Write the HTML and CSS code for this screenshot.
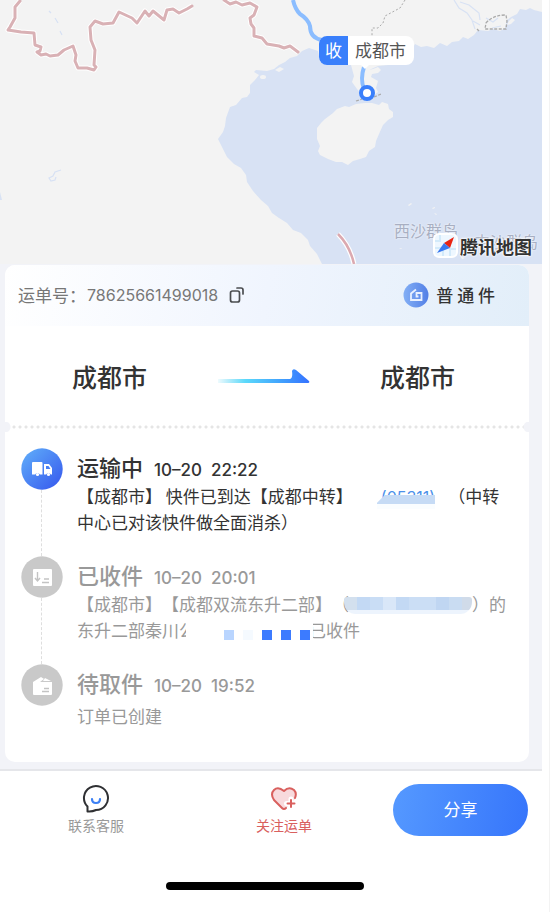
FILE: index.html
```html
<!DOCTYPE html>
<html lang="zh-CN">
<head>
<meta charset="utf-8">
<meta name="viewport" content="width=device-width, initial-scale=1">
<title>运单详情</title>
<link rel="stylesheet" href="styles.css">
</head>
<body>
<div class="page">
  <section class="map" aria-label="物流地图">
    <svg class="map-art" viewBox="0 0 542 264" preserveAspectRatio="xMinYMin slice" aria-hidden="true">
      <rect width="542" height="264" fill="#f3f3f3"/>
      <path fill="#d8e2f4" d="M542 12 L534 10 530 8 526 10 520 9 517 14 511 17 507 20 505 28 500 31 493 29 488 31 478 30 474 35 468 39 463 37 459 41 452 42 447 46 440 43 434 48 427 46 421 47 415 44 411 51 398 64 378 66 369 70 373 69 378 67 381 70 378 73 372 74 371 77 378 81 376 88 378 92 374 95 361 94 357 89 352 82 354 76 351 65 320 62 318 51 309 48 302 51 297 56 290 58 285 62 279 65 274 69 267 71 256 70 254 72 259 75 255 80 250 85 250 93 247 97 242 98 236 105 230 107 226 118 225 126 223 132 218 139 223 149 227 157 234 164 241 168 246 175 247 182 253 191 261 200 268 206 272 213 279 218 287 223 293 230 301 233 308 240 310 246 317 254 322 264 H542 Z"/>
      <g fill="#f3f3f3">
        <path d="M317 139 L317 128 321 123 325 119 333 113 337 109 345 106 349 107 356 104 365 103 372 103 379 105 382 102 388 104 389 109 393 112 393 117 388 120 383 125 379 134 376 141 375 147 369 151 366 157 360 159 353 161 348 165 342 162 336 162 328 159 320 155 318 151 320 146Z"/>
        <path d="M408 205l3-2 1 1-3 2zM432 208l3-1v1l-2 1zM434 213l3 1-1 1zM399 249l2-1 1 1zM441 255l3 1-2 1zM460 256l5 2-3 1z"/>
        <ellipse cx="263" cy="77" rx="3" ry="2"/>
        <path d="M275 70l5-3 4 2-5 3zM507 25l2-4 3-3 3 2-4 4z"/>
      </g>
      <path d="M454 0l5 8 8 5 5 7 3 9M460 2l9 3 10 8 1 7M473 21l7 4M486 18l7 4 5-4M492 28l9-2" fill="none" stroke="#d8e2f4" stroke-width="1.2"/>
      <path d="M61 170l-6 2-2 4-4 2 2 3 4-1 1-3M49 11l2 2M55 18l3 5M60 31l2 4" fill="none" stroke="#d7e1f4" stroke-width="1.2"/>
      <path d="M0 192v8h2z" fill="#d8e2f4"/>
      <g fill="none" stroke="#fff" stroke-width="5" stroke-linejoin="round">
        <path d="M20 1l-5 6 0 11-5 9-2 3 13 2 13 1 1 12 6 2-1 4-3 1 4 3 5-1 4 2 8-1 6-5 9-4 3 9-1 6 3 7 9 0 7 2 2-3-2-2 1-15-4-10-1-13 5-6 8 3 10-1 6-11 13 6 5 5 8-12 4 5 4-5 11 9 3-10 6-1 6 4 8-4 5-3"/>
        <path d="M224 0l6 4 6-2 6 3 8-2 7 4-3 8-4 3 1 6 3 4v8l8 2 5 6 12 2 5 2 6-2 8 6"/>
      </g>
      <g fill="none" stroke="#d9b1b5" stroke-width="3" stroke-linecap="round" stroke-linejoin="round">
        <path d="M20 1l-5 6 0 11-5 9-2 3 13 2 13 1 1 12 6 2-1 4-3 1 4 3 5-1 4 2 8-1 6-5 9-4 3 9-1 6 3 7 9 0 7 2 2-3-2-2 1-15-4-10-1-13 5-6 8 3 10-1 6-11 13 6 5 5 8-12 4 5 4-5 11 9 3-10 6-1 6 4 8-4 5-3"/>
        <path d="M224 0l6 4 6-2 6 3 8-2 7 4-3 8-4 3 1 6 3 4v8l8 2 5 6 12 2 5 2 6-2 8 6"/>
      </g>
      <path d="M338 234q12 12 16 30" fill="none" stroke="#fff" stroke-width="5"/>
      <path d="M338 234q12 12 16 30" fill="none" stroke="#dba9b0" stroke-width="2.5"/>
      <path d="M405 0l-5 8-15 8-2 7-5 5h-6v8" fill="none" stroke="#aaa" stroke-dasharray="2 2"/>
      <path d="M486 23q7-8 20-8l1 6-1 8h-21zM477 29l2 2M356 101l6-2M374 97l7-3" fill="none" stroke="#aaa" stroke-width="1.3" stroke-dasharray="3 1.5"/>
      <path d="M293 0q2 9 7 14 8 5 10 12 0 12 12 14" fill="none" stroke="#8bbdff" stroke-width="4"/>
      <path d="M364 67q-4 12 0 22" fill="none" stroke="#8bbdff" stroke-width="4"/>
      <path d="M360 64h10l-5 5z" fill="#fff"/>
      <circle cx="367" cy="93" r="6" fill="#fff" stroke="#397ffb" stroke-width="4"/>
    </svg>
    <div class="pin"><span class="pin-tag">收</span><span class="pin-city">成都市</span></div>
    <span class="island island-west">西沙群岛</span>
    <span class="island island-mid">中沙群岛</span>
    <div class="brand">
      <svg width="25" height="25" viewBox="0 0 25 25" aria-hidden="true">
        <rect x="1" y="1" width="23" height="23" rx="5" fill="#eef7ff" stroke="#fff" stroke-width="2"/>
        <path d="M7 2v6H2M17 23v-7h6M2 15h8v8" fill="none" stroke="#d3eafa" stroke-width="2"/>
        <path d="M21 4l-4 11-6-5z" fill="#e92514"/><path d="M4 20l7-10 6 5z" fill="#3979ef"/>
      </svg>
      <span>腾讯地图</span>
    </div>
  </section>

  <main class="content">
    <section class="card ticket">
      <header class="ticket-head">
        <div class="number">
          <span>运单号：</span><span class="digits">78625661499018</span>
          <button class="copy" type="button" aria-label="复制运单号">
            <svg width="16" height="16" viewBox="0 0 16 16" fill="none" stroke="#4b4d50" stroke-width="1.7" stroke-linecap="round"><rect x="1.5" y="4" width="9" height="11" rx="2"/><path d="M8 1h4q2 0 2 2v4"/></svg>
          </button>
        </div>
        <div class="kind">
          <svg width="26" height="26" viewBox="0 0 26 26" aria-hidden="true">
            <defs><linearGradient id="kindFill"><stop stop-color="#83aff5"/><stop offset="1" stop-color="#527fe6"/></linearGradient></defs>
            <circle cx="13" cy="13" r="12.5" fill="url(#kindFill)"/>
            <path d="M13 7.500L8 11.500V18H18.500V11H13.500V14.500H15.500" fill="none" stroke="#e8f0ff" stroke-width="1.800"/>
          </svg>
          <span>普 通 件</span>
        </div>
      </header>
      <div class="route">
        <strong>成都市</strong>
        <svg width="94" height="16" viewBox="0 0 94 16" aria-hidden="true">
          <defs><linearGradient id="arrowFill"><stop stop-color="#56d4f4" stop-opacity=".1"/><stop offset=".3" stop-color="#5bd9fb"/><stop offset=".65" stop-color="#43a7fd"/><stop offset="1" stop-color="#3572ff"/></linearGradient></defs>
          <path d="M1 11H73Q76 10 75 3Q76 0 79 2L92 13Q93 15 91 15H1Z" fill="url(#arrowFill)"/>
        </svg>
        <strong>成都市</strong>
      </div>
    </section>
    <div class="perforation"></div>
    <section class="card history">
      <ol class="events">
        <li class="event current">
          <svg class="badge" width="42" height="42" viewBox="0 0 42 42" aria-hidden="true">
            <defs><linearGradient id="truckFill" x1="0" y1="0" x2="1" y2="1"><stop stop-color="#61b0fa"/><stop offset="1" stop-color="#3556ed"/></linearGradient></defs>
            <circle cx="21" cy="21" r="20.700" fill="url(#truckFill)"/>
            <path fill="#fff" d="M12 14h8.500q1 0 1 1v11.500H19a3 3 0 0 0-5 0h-3V15q0-1 1-1zM23 16h5l3 4v6.500h-1a3 3 0 0 0-5 0h-2z"/>
            <circle cx="16.500" cy="26.500" r="1.600" fill="#fff"/><circle cx="27.500" cy="26.500" r="1.600" fill="#fff"/>
            <path d="M25 18h2.500l2 3H25z" fill="#477ff4"/>
          </svg>
          <div class="event-body">
            <h2>运输中 <time>10–20&nbsp; 22:22</time></h2>
            <p>【成都市】 快件已到达【成都中转】<span class="phone">(05311)</span>（中转中心已对该快件做全面消杀）</p>
          </div>
        </li>
        <li class="event">
          <svg class="badge" width="42" height="42" viewBox="0 0 42 42" aria-hidden="true">
            <circle cx="21" cy="21" r="20.700" fill="#c9c9c9"/><rect x="12" y="13" width="19" height="17" rx="1" fill="#fff"/>
            <path d="M16.500 16v8M14 22l2.500 3 2.500-3M23 23h5M21 26.500h7" fill="none" stroke="#c3c3c3" stroke-width="1.400"/>
          </svg>
          <div class="event-body">
            <h2>已收件 <time>10–20&nbsp; 20:01</time></h2>
            <p>【成都市】【成都双流东升二部】（<span class="mosaic"></span>）的<br>东升二部秦川<span class="courier">公<span class="courier-mask"><i></i><i></i><i></i><i></i><i></i></span></span>已收件</p>
          </div>
        </li>
        <li class="event created">
          <svg class="badge" width="42" height="42" viewBox="0 0 42 42" aria-hidden="true">
            <circle cx="21" cy="21" r="20.700" fill="#c9c9c9"/>
            <path d="M12 18l8-5 3 2-4 3h12v12q0 1-1 1H13q-1 0-1-1z" fill="#fff"/><path d="M24 14l6 3h-8z" fill="#fff"/>
            <path d="M23 24.500h5M21 27.500h7" stroke="#c3c3c3" stroke-width="1.400"/>
          </svg>
          <div class="event-body">
            <h2>待取件 <time>10–20&nbsp; 19:52</time></h2>
            <p>订单已创建</p>
          </div>
        </li>
      </ol>
    </section>
  </main>

  <footer class="bottom">
    <div class="actions">
      <button class="action" type="button">
        <svg width="28" height="30" viewBox="0 0 28 30" fill="none" stroke-linecap="round" stroke-linejoin="round" aria-hidden="true"><path d="M5.500 22.500A12 12 0 1 1 14 26Q10 28 5.500 27.500Z" stroke="#2f3033" stroke-width="2"/><path d="M10 15q0 4 4 4t4-4" stroke="#3c80f5" stroke-width="2.200"/></svg>
        <span>联系客服</span>
      </button>
      <button class="action follow" type="button">
        <svg width="28" height="30" viewBox="0 0 28 30" fill="none" stroke-linecap="round" stroke-linejoin="round" aria-hidden="true"><path d="M14 7Q8 1 4 6Q0 11 4 17L12 24Q14 26 16 24L26 14Q28 8 23 5Q18 3 14 7Z" fill="#f8dadd"/><path d="M16 24Q14 26 12 24L4 16Q0 10 4 6Q8 2 14 7Q19 2 24 6Q27 9 25 14" stroke="#d9605e" stroke-width="2"/><path d="M21 15v9M16.500 19.500h9" stroke="#fff" stroke-width="5"/><path d="M21 16v7M17.500 19.500h7" stroke="#d9605e" stroke-width="2"/></svg>
        <span>关注运单</span>
      </button>
      <button class="share" type="button">分享</button>
    </div>
    <div class="home-bar"></div>
  </footer>
</div>
</body>
</html>
```
FILE: styles.css
```css
* { box-sizing: border-box; }

body {
  margin: 0;
  padding-right: 7px;
  border-right: 1px solid #f3f3f3;
  background: #fff;
  color: #333;
  font-family: "Noto Sans CJK SC", "Noto Sans", sans-serif;
  font-size: 17px;
  text-spacing-trim: space-all;
}

button {
  padding: 0;
  border: 0;
  background: none;
  color: inherit;
  font: inherit;
}

svg { display: block; flex: none; }

.page { display: flex; flex-direction: column; min-height: 100vh; }

/* Map */
.map {
  position: relative;
  height: 264px;
  overflow: hidden;
}

.map-art { width: 100%; height: 100%; }

.pin {
  position: absolute;
  left: 319px;
  top: 36px;
  display: flex;
  height: 29px;
  overflow: hidden;
  border-radius: 8px;
  background: #fff;
  line-height: 28px;
}

.pin-tag { width: 29px; background: #397ffb; color: #fff; text-align: center; }
.pin-city { padding: 0 8px 0 7px; color: #555; }

.island {
  position: absolute;
  color: #a8afc2;
  font-size: 16px;
  line-height: 20px;
  text-shadow: 0 0 2px #fff;
}

.island-west { left: 394px; top: 220px; }
.island-mid { left: 474px; top: 231px; }

.brand {
  position: absolute;
  right: 10px;
  bottom: 6px;
  display: flex;
  align-items: center;
  gap: 2px;
  color: #333;
  font-size: 18px;
  font-weight: 700;
  line-height: 24px;
  text-shadow: 0 0 2px #fff, 0 0 2px #fff, 0 0 3px #fff;
}

/* Waybill */
.content {
  padding: 1px 13px 7px 5px;
  background: #f2f3f8;
}

.card { overflow: hidden; background: #fff; }
.ticket { border-radius: 10px 10px 0 0; }

.ticket-head {
  display: flex;
  justify-content: space-between;
  align-items: center;
  height: 61px;
  padding: 0 34px 2px 13px;
  background: linear-gradient(100deg, #fff, #f0f5fe 50%, #e2eef9);
}

.number, .kind { display: flex; align-items: center; }
.number { color: #777; }
.digits { margin-left: 1px; font-family: Inter, sans-serif; font-size: 16px; }
.copy { margin-left: 11px; }
.kind { gap: 7px; font-weight: 500; }

.route {
  display: flex;
  justify-content: space-between;
  align-items: center;
  height: 96px;
  padding: 3px 74px 0 67px;
  font-size: 25px;
}

.route strong { font-weight: 500; }

.perforation {
  height: 10px;
  background:
    radial-gradient(circle at 0 5px, #f2f3f8 5px, transparent 6px),
    radial-gradient(circle at 100% 5px, #f2f3f8 5px, transparent 6px),
    radial-gradient(circle, #e5e5e5 1px, transparent 2px) 6px 0 / 6px 10px,
    #fff;
}

/* Tracking history */
.history { padding: 16px 16px 0; border-radius: 0 0 10px 10px; }
.events { margin: 0; padding: 0; list-style: none; }

.event {
  position: relative;
  display: flex;
  gap: 14px;
  min-height: 108px;
  color: #999;
}

.event:not(:last-child)::before {
  content: "";
  position: absolute;
  left: 20px;
  top: 42px;
  bottom: 0;
  border-left: 1px dashed #dedede;
}

.event-body { padding-top: 5px; white-space: nowrap; }
.event h2 { margin: 0; font-size: 22px; font-weight: 500; line-height: 26px; }
.event time { margin-left: 6px; font: 500 17px/26px Inter, sans-serif; }
.event p { margin: 0; line-height: 26px; white-space: normal; }
.event.created { min-height: 98px; }
.created p { padding-top: 4px; }
.current { color: #333; }

.phone {
  position: relative;
  display: inline-block;
  margin: 0 13px 0 28px;
  color: #4c91ea;
  font-family: Inter, sans-serif;
  font-size: 16px;
  line-height: 24px;
}

.phone::after {
  content: "";
  position: absolute;
  left: -4px;
  right: 0;
  top: 10px;
  height: 14px;
  background: linear-gradient(#c6dbf5 0 9px, #fafdff 9px);
  clip-path: polygon(8px 0, 100% 0, 100% 100%, 0 100%, 0 8px);
}

.mosaic {
  display: inline-block;
  width: 128px;
  height: 17px;
  margin-left: -5px;
  border-radius: 3px 3px 12px 12px;
  background: linear-gradient(transparent 13px, #edf4fd 13px), linear-gradient(90deg, #d3e0ee 0 13px, #c3d9f4 13px 26px, #c9ddf5 26px 39px, #d9e7f8 39px 52px, #c3d9f4 52px 65px, #cbdef5 65px 92px, #c0d6f2 92px 105px, #c9dcf2 105px 118px, #d0dbe9 118px);
  vertical-align: -3px;
}

.courier { position: relative; display: inline-block; width: 130px; }

.courier-mask {
  position: absolute;
  left: 7px;
  right: -4px;
  top: 0;
  display: flex;
  align-items: center;
  gap: 9px;
  height: 26px;
  padding: 9px 0 0 38px;
  background: #fff;
}

.courier-mask i { width: 10px; height: 10px; background: #3c7bff; }
.courier-mask i:nth-child(1) { background: #b9d5ff; }
.courier-mask i:nth-child(2) { background: #f5faff; }

/* Bottom actions */
.bottom { border-top: 2px solid #e5e6ea; background: #fff; }

.actions {
  display: grid;
  grid-template-columns: 192fr 184fr 166fr;
  align-items: center;
  height: 78px;
}

.action {
  display: flex;
  flex-direction: column;
  align-items: center;
  color: #999;
  font-size: 14px;
  line-height: 22px;
}

.action.follow { color: #d9605e; }

.share {
  height: 52px;
  margin: 0 14px 0 17px;
  padding-bottom: 3px;
  border-radius: 26px;
  background: linear-gradient(100deg, #5599ff, #3675fb);
  color: #fff;
}

.bottom { padding-right: 0; }

.home-bar {
  width: 198px;
  height: 8px;
  margin: 33px auto 0;
  border-radius: 4px;
  background: #000;
  transform: translateX(-6px);
}
```
